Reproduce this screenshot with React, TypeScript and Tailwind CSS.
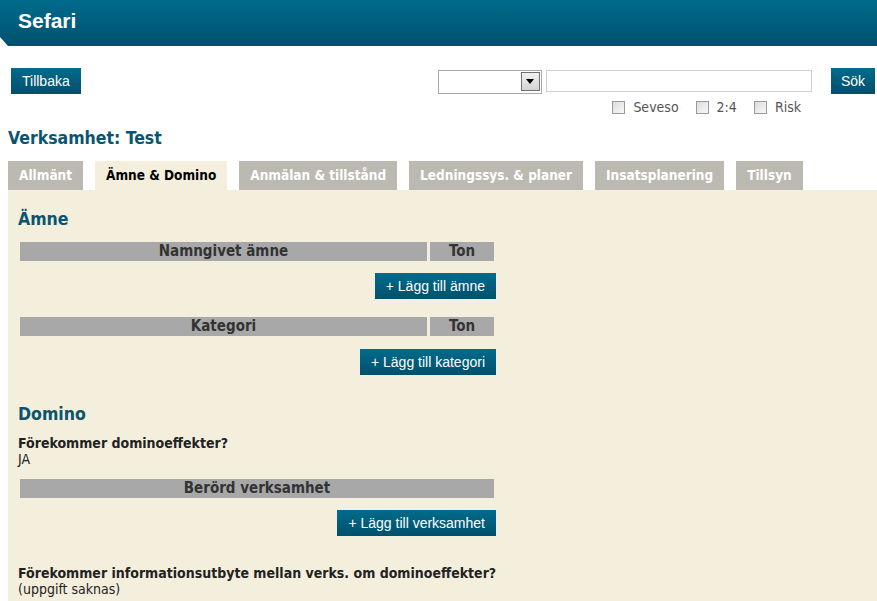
import React from "react";

const body = { fontFamily: '"DejaVu Sans Condensed", "DejaVu Sans", Verdana, sans-serif' };
const arial = { fontFamily: '"Liberation Sans", Arial, sans-serif' };

function BlueButton({ children, className = "" }: { children: React.ReactNode; className?: string }) {
  return (
    <button
      style={arial}
      className={`h-[26px] px-[11px] text-[14px] text-white bg-gradient-to-b from-[#006b8c] to-[#00506b] leading-[26px] ${className}`}
    >
      {children}
    </button>
  );
}

function Check({ label }: { label: string }) {
  return (
    <span className="flex items-center gap-[8px]">
      <span className="w-[13px] h-[13px] border border-[#9a9a9a] bg-gradient-to-br from-[#dcdcdc] to-[#f8f8f8]" />
      <span className="text-[14px] text-[#555] leading-[16px]">{label}</span>
    </span>
  );
}

function TableHead({ cols }: { cols: { label: string; w?: string }[] }) {
  return (
    <div className="flex gap-[3px] px-[2px]">
      {cols.map((c, i) => (
        <div
          key={i}
          className={`h-[19px] bg-[#a8a8a8] text-[#333] font-bold text-[15px] leading-[19px] text-center ${c.w ?? "flex-1"}`}
        >
          {c.label}
        </div>
      ))}
    </div>
  );
}

export default function App() {
  const tabs = ["Allmänt", "Ämne & Domino", "Anmälan & tillstånd", "Ledningssys. & planer", "Insatsplanering", "Tillsyn"];
  return (
    <div style={body} className="w-[877px] h-[601px] overflow-hidden bg-white relative">
      {/* header */}
      <div className="relative h-[46px] bg-gradient-to-b from-[#006b8c] to-[#00516d] flex items-center pl-[18px]">
        <span style={arial} className="text-white font-bold text-[21px] -mt-[4px]">Sefari</span>
        <svg className="absolute left-0 bottom-0" width="8" height="9" viewBox="0 0 8 9">
          <polygon points="0,0 8,9 0,9" fill="#ffffff" />
        </svg>
      </div>

      {/* toolbar */}
      <div className="flex items-start justify-between pl-[11px] pr-[2px] mt-[22px]">
        <BlueButton>Tillbaka</BlueButton>
        <div className="flex flex-col items-end">
          <div className="flex items-center">
            <div className="w-[104px] h-[24px] border border-[#a9a9a9] bg-white flex items-center justify-end pr-[1px] mt-[1px]">
              <div className="w-[19px] h-[19px] border border-[#707070] bg-gradient-to-b from-[#f0f0f0] to-[#d4d4d4] flex items-center justify-center">
                <svg width="8" height="5" viewBox="0 0 8 5">
                  <polygon points="0,0 8,0 4,5" fill="#000" />
                </svg>
              </div>
            </div>
            <div className="ml-[4px] w-[266px] h-[22px] border border-[#cfcfcf] bg-white" />
            <BlueButton className="ml-[19px] !px-[10px]">Sök</BlueButton>
          </div>
          <div className="flex gap-[17px] mr-[74px] mt-[5px]">
            <Check label="Seveso" />
            <Check label="2:4" />
            <Check label="Risk" />
          </div>
        </div>
      </div>

      <h1 className="text-[#0b5470] font-bold text-[17.5px] ml-[8px] mt-[12px] leading-[22px]">Verksamhet: Test</h1>

      {/* tabs */}
      <div className="flex gap-[12px] ml-[8px] mt-[12px]">
        {tabs.map((t, i) => (
          <div
            key={t}
            className={`h-[29px] px-[11px] flex items-center font-bold text-[13.5px] ${
              i === 1 ? "bg-[#f3efdc] text-black" : "bg-[#bcb9b2] text-white"
            }`}
          >
            {t}
          </div>
        ))}
      </div>

      {/* panel */}
      <div className="ml-[8px] bg-[#f3efdc] pl-[10px] pt-[18px] h-[500px]">
        <div className="w-[478px]">
          <h2 className="text-[#0b5470] font-bold text-[17.5px] leading-[22px]">Ämne</h2>
          <div className="mt-[12px]">
            <TableHead cols={[{ label: "Namngivet ämne" }, { label: "Ton", w: "w-[64px]" }]} />
          </div>
          <div className="flex justify-end mt-[12px]">
            <BlueButton>+ Lägg till ämne</BlueButton>
          </div>
          <div className="mt-[18px]">
            <TableHead cols={[{ label: "Kategori" }, { label: "Ton", w: "w-[64px]" }]} />
          </div>
          <div className="flex justify-end mt-[13px]">
            <BlueButton>+ Lägg till kategori</BlueButton>
          </div>

          <h2 className="text-[#0b5470] font-bold text-[17.5px] leading-[22px] mt-[28px]">Domino</h2>
          <div className="mt-[10px] text-[14px] font-bold text-[#222] leading-[16px]">Förekommer dominoeffekter?</div>
          <div className="text-[14px] text-[#222] leading-[16px]">JA</div>
          <div className="mt-[12px]">
            <TableHead cols={[{ label: "Berörd verksamhet" }]} />
          </div>
          <div className="flex justify-end mt-[12px]">
            <BlueButton>+ Lägg till verksamhet</BlueButton>
          </div>
          <div className="mt-[29px] text-[14px] font-bold text-[#222] leading-[16px] whitespace-nowrap">
            Förekommer informationsutbyte mellan verks. om dominoeffekter?
          </div>
          <div className="text-[14px] text-[#222] leading-[16px]">(uppgift saknas)</div>
        </div>
      </div>
    </div>
  );
}
